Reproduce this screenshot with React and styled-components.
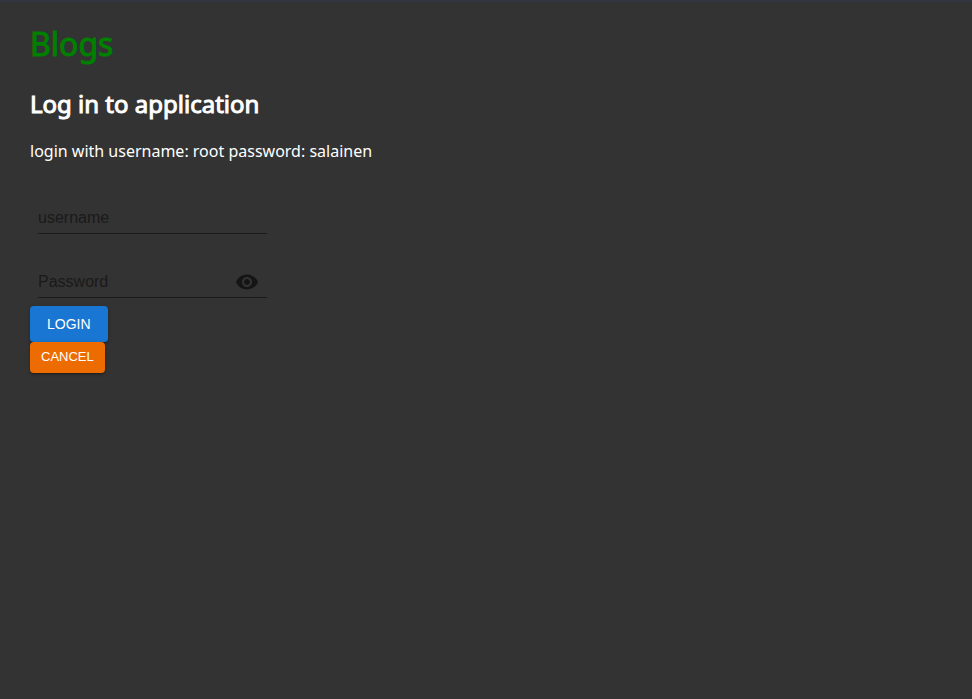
import React, { useState } from "react";
import styled, { createGlobalStyle } from "styled-components";

const GlobalStyle = createGlobalStyle`
  * { box-sizing: border-box; }
  body {
    margin: 0;
    background: #333333;
    color: #ffffff;
    font-family: "Noto Sans", sans-serif;
    font-size: 16px;
    line-height: 24px;
  }
`;

const Page = styled.main`
  padding: 18px 30px;
  border-top: 2px solid #333541;
`;

const Title = styled.h1`
  margin: 0 0 20px;
  color: green;
  font-size: 32px;
  line-height: 48px;
  font-weight: 400;
  -webkit-text-stroke: 1px currentColor;
`;

const Heading = styled.h2`
  margin: 0 0 19px;
  font-size: 24px;
  line-height: 32px;
  font-weight: 400;
  -webkit-text-stroke: 1px currentColor;
`;

const Hint = styled.p`
  margin: 0 0 39px;
`;

const Form = styled.form`
  display: flex;
  flex-direction: column;
  align-items: flex-start;
`;

const Field = styled.label`
  display: flex;
  align-items: center;
  width: 229px;
  height: 32px;
  margin: 0 8px ${(p) => (p.$last ? 8 : 32)}px;
  border-bottom: 1px solid #1a1a1a;
`;

const Input = styled.input`
  flex: 1;
  min-width: 0;
  padding: 0;
  border: 0;
  outline: 0;
  background: none;
  color: #1a1a1a;
  font: 16px/24px "Liberation Sans", Arial, sans-serif;
  &::placeholder {
    color: #1a1a1a;
    opacity: 1;
  }
`;

const IconButton = styled.button`
  display: flex;
  padding: 0 8px;
  border: 0;
  background: none;
  color: #151515;
  cursor: pointer;
`;

const Button = styled.button`
  padding: ${(p) => (p.$small ? "4px 11px 5px" : "6px 17px")};
  border: 0;
  border-radius: 4px;
  background: ${(p) => p.$color};
  color: #ffffff;
  font: 500 ${(p) => (p.$small ? "13px/22px" : "14px/24px")} "Liberation Sans", Arial, sans-serif;
  text-transform: uppercase;
  box-shadow: 0 3px 1px -2px rgba(0, 0, 0, 0.2), 0 2px 2px 0 rgba(0, 0, 0, 0.14),
    0 1px 5px 0 rgba(0, 0, 0, 0.12);
  cursor: pointer;
`;

function EyeIcon() {
  return (
    <svg width="24" height="24" viewBox="0 0 24 24" fill="currentColor" aria-hidden="true">
      <path d="M12 4.5C7 4.5 2.73 7.61 1 12c1.73 4.39 6 7.5 11 7.5s9.27-3.11 11-7.5c-1.73-4.39-6-7.5-11-7.5zM12 17c-2.76 0-5-2.24-5-5s2.24-5 5-5 5 2.24 5 5-2.24 5-5 5zm0-8c-1.66 0-3 1.34-3 3s1.34 3 3 3 3-1.34 3-3-1.34-3-3-3z" />
    </svg>
  );
}

export default function App() {
  const [visible, setVisible] = useState(false);
  return (
    <>
      <GlobalStyle />
      <Page>
        <Title>Blogs</Title>
        <Heading>Log in to application</Heading>
        <Hint>login with username: root password: salainen</Hint>
        <Form onSubmit={(e) => e.preventDefault()}>
          <Field>
            <Input type="text" name="username" placeholder="username" aria-label="username" />
          </Field>
          <Field $last>
            <Input
              type={visible ? "text" : "password"}
              name="password"
              placeholder="Password"
              aria-label="Password"
            />
            <IconButton
              type="button"
              aria-label="toggle password visibility"
              onClick={() => setVisible(!visible)}
            >
              <EyeIcon />
            </IconButton>
          </Field>
          <Button type="submit" $color="#1976d2">Login</Button>
          <Button type="reset" $color="#ed6c02" $small>Cancel</Button>
        </Form>
      </Page>
    </>
  );
}
